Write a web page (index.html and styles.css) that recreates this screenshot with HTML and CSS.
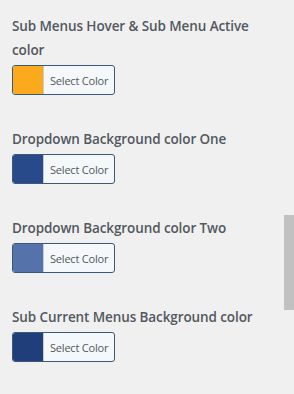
FILE: index.html
```html
<!DOCTYPE html>
<html>
<head>
<meta charset="utf-8">
<link rel="stylesheet" href="styles.css">
</head>
<body>
<div class="settings">
  <div class="field">
    <div class="label">Sub Menus Hover &amp; Sub Menu Active color</div>
    <button class="picker"><span class="swatch swatch-orange"></span><span class="picker-text">Select Color</span></button>
  </div>
  <div class="field">
    <div class="label">Dropdown Background color One</div>
    <button class="picker"><span class="swatch swatch-navy"></span><span class="picker-text">Select Color</span></button>
  </div>
  <div class="field">
    <div class="label">Dropdown Background color Two</div>
    <button class="picker"><span class="swatch swatch-blue"></span><span class="picker-text">Select Color</span></button>
  </div>
  <div class="field">
    <div class="label">Sub Current Menus Background color</div>
    <button class="picker"><span class="swatch swatch-dark"></span><span class="picker-text">Select Color</span></button>
  </div>
</div>
<div class="scroll-thumb"></div>
</body>
</html>
```

FILE: styles.css
```css
html, body {
  margin: 0;
  padding: 0;
  background: #f0f0f1;
  height: 100%;
  overflow: hidden;
}
body {
  font-family: "Open Sans", "Noto Sans", sans-serif;
  color: #52585e;
  position: relative;
}
.settings {
  padding: 14px 0 0 12px;
  display: flex;
  flex-direction: column;
  gap: 32px;
}
.field {
  display: flex;
  flex-direction: column;
  align-items: flex-start;
  gap: 3px;
}
.label {
  font-size: 13.5px;
  font-weight: 600;
  letter-spacing: -0.1px;
  line-height: 24px;
  width: 250px;
}
.picker {
  display: flex;
  align-items: stretch;
  height: 30px;
  width: 103px;
  padding: 0;
  border: 1px solid #3b5878;
  border-radius: 3px;
  background: #f5f8fa;
  overflow: hidden;
  cursor: pointer;
  font-family: inherit;
}
.swatch {
  width: 30px;
  flex: none;
  border-right: 1px solid #c8ccd0;
}
.swatch-orange { background: #fbaa1c; }
.swatch-navy { background: #284a8b; }
.swatch-blue { background: #5572aa; }
.swatch-dark { background: #1f3e7a; }
.picker-text {
  display: flex;
  align-items: center;
  padding-left: 6px;
  font-size: 11px;
  letter-spacing: -0.2px;
  color: #50575e;
  white-space: nowrap;
}
.scroll-thumb {
  position: absolute;
  right: 0;
  top: 215px;
  width: 10px;
  height: 95px;
  background: #c1c1c1;
}
```
